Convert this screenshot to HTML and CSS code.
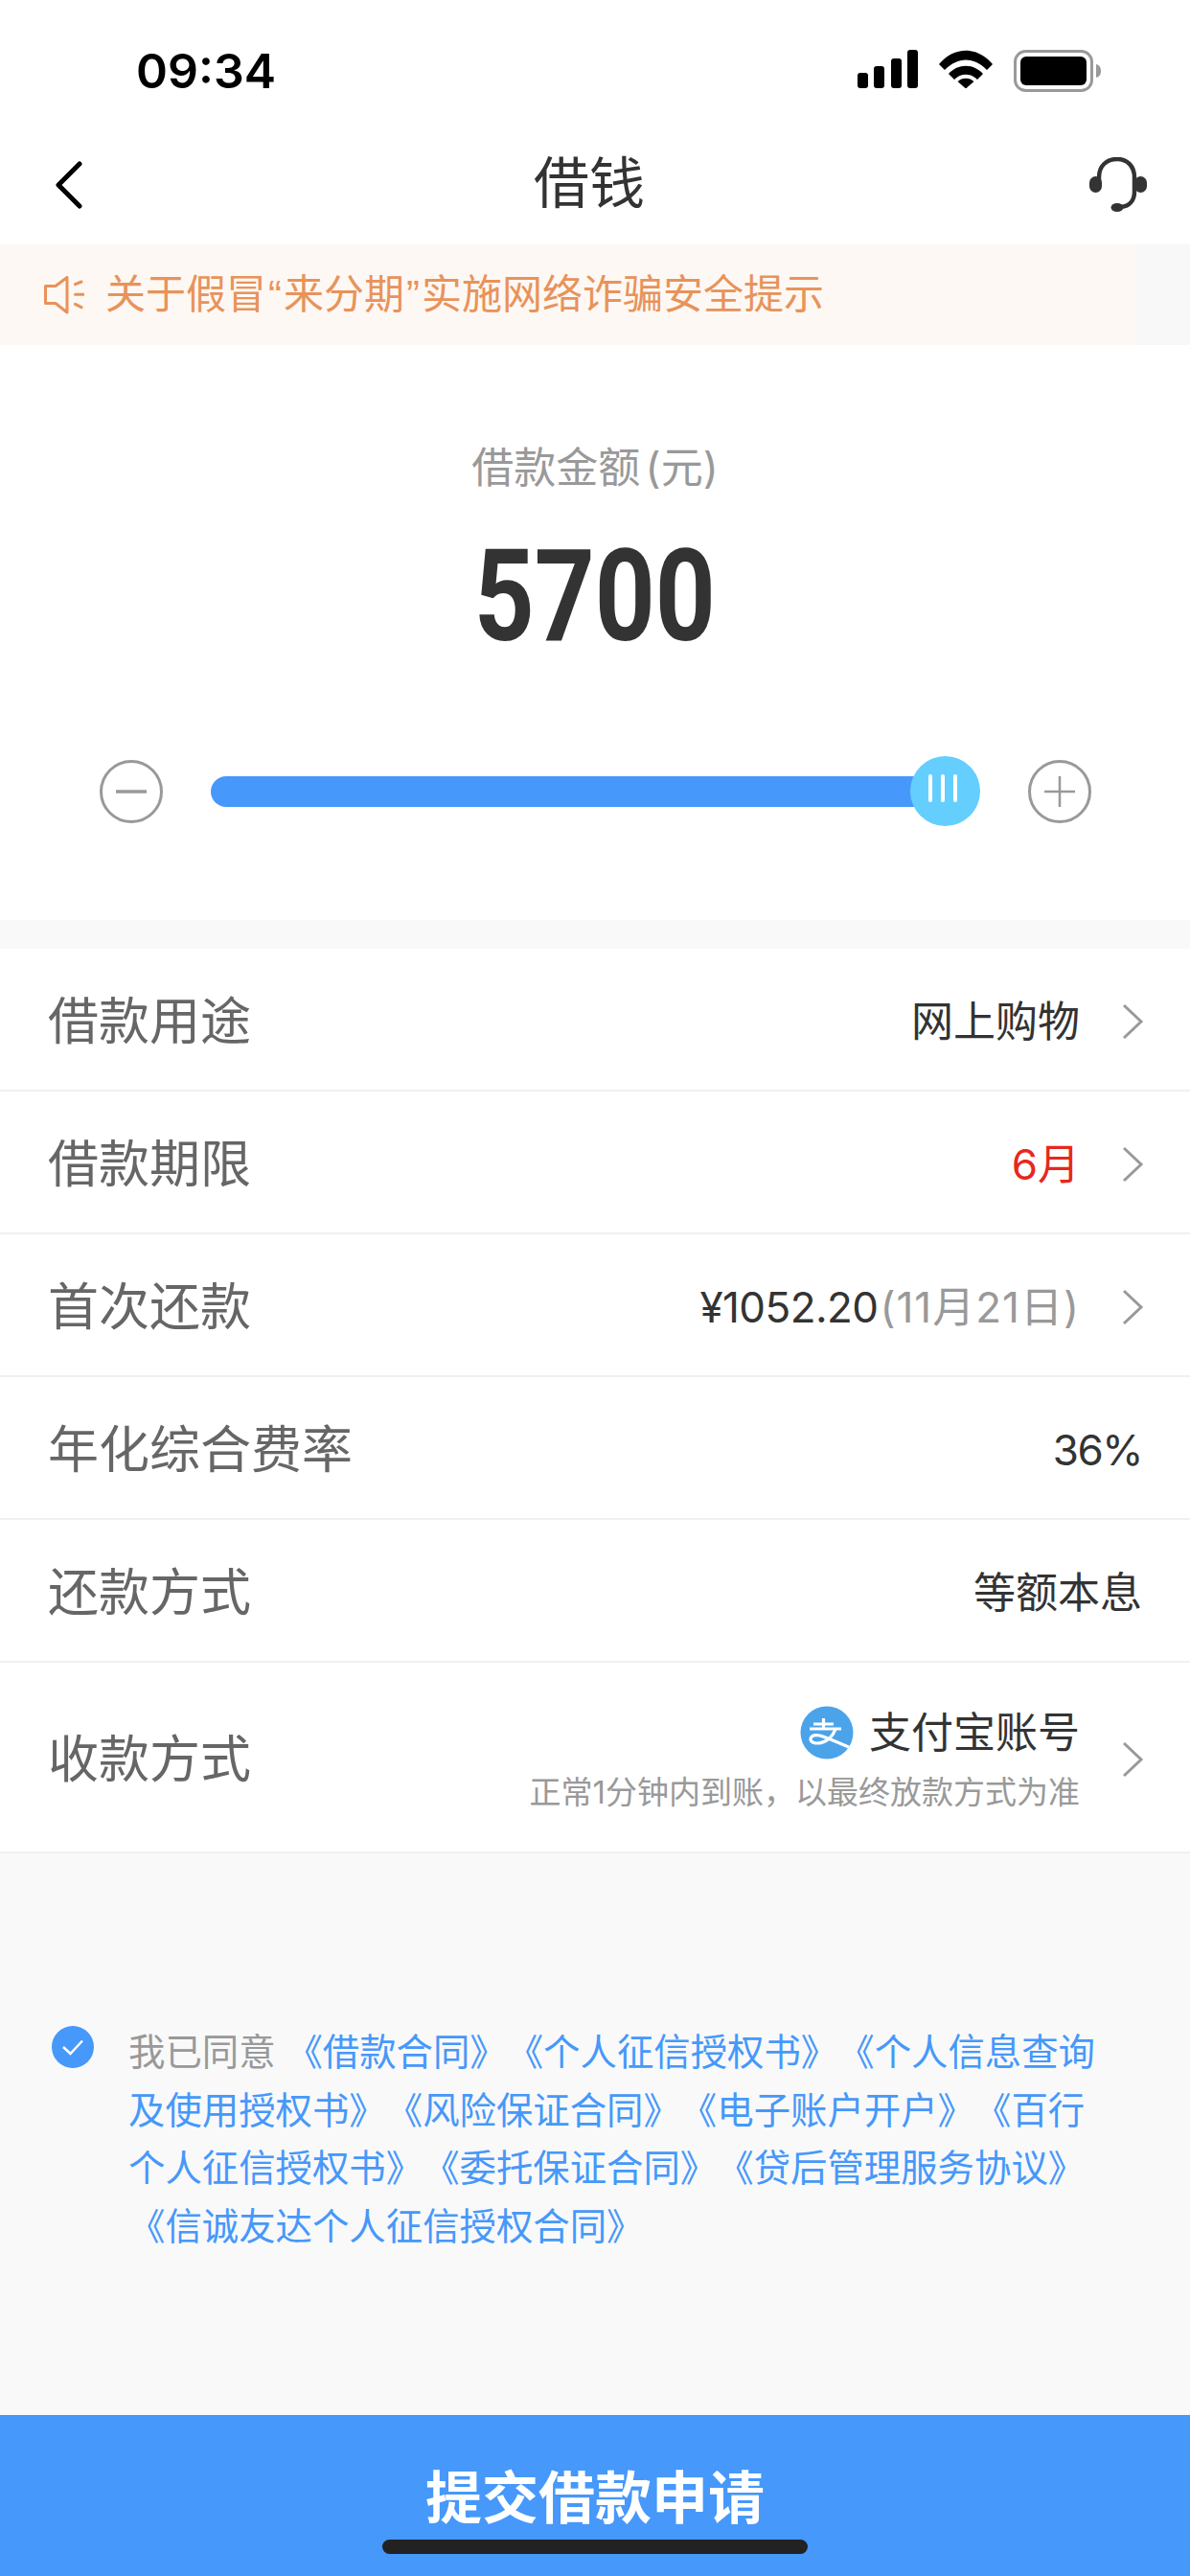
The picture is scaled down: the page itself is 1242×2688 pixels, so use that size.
FILE: index.html
```html
<!DOCTYPE html>
<html lang="zh-CN">
<head>
<meta charset="utf-8">
<title>借钱</title>
<link rel="stylesheet" href="styles.css">
</head>
<body>
<div class="page">
  <header class="status">
    <span class="time">09:34</span>
    <div class="status-icons">
      <svg class="signal" width="63" height="40" viewBox="0 0 63 40"><rect x="0" y="24" width="11" height="16" rx="3"/><rect x="17" y="17" width="11" height="23" rx="3"/><rect x="35" y="9" width="11" height="31" rx="3"/><rect x="52" y="0" width="11" height="40" rx="3"/></svg>
      <svg class="wifi" width="56" height="40" viewBox="0 0 56 40"><path d="M0 15 C16 -4 40 -4 56 15 L50 21 C36 7 20 7 6 21 Z"/><path d="M10 25 C20 14 36 14 46 25 L40 31 C33 24 23 24 16 31 Z"/><path d="M19.500 33 C24 28.500 32 28.500 36.500 33 L28 40.500 Z"/></svg>
      <svg class="battery" width="92" height="44" viewBox="0 0 92 44"><rect x="1.500" y="1.500" width="80" height="41" rx="11" fill="none" stroke="#999" stroke-width="3"/><rect x="7" y="7" width="69" height="30" rx="6"/><path d="M86 15 C90 16 91 19 91 22 C91 25 90 28 86 29 Z" fill="#999"/></svg>
    </div>
  </header>

  <nav class="nav">
    <svg class="nav-back" width="32" height="50" viewBox="0 0 32 50"><path d="M28 3 L6 25 L28 47" fill="none" stroke="#000" stroke-width="5" stroke-linecap="round" stroke-linejoin="round"/></svg>
    <h1 class="nav-title">借钱</h1>
    <svg class="nav-help" width="60" height="58" viewBox="0 0 60 58"><path d="M10 26 V21 C10 9 18 2 29 2 C40 2 47 10 47 21 V36 C47 45 42 51 33 52" fill="none" stroke="#333" stroke-width="4.500" stroke-linecap="round"/><rect x="0" y="20" width="13" height="17" rx="6.500" fill="#333"/><rect x="47" y="20" width="13" height="17" rx="6.500" fill="#333"/><ellipse cx="29" cy="52.500" rx="6.500" ry="4.500" fill="#333"/></svg>
  </nav>

  <div class="notice">
    <div class="notice-body">
      <svg class="notice-icon" width="42" height="40" viewBox="0 0 42 40"><path d="M1.500 10.500 H12 L24 1.500 V38 L12 28.500 H1.500 Z" fill="none" stroke="#e8935a" stroke-width="3" stroke-linejoin="round"/><path d="M32.500 8.700 L39 6 M32.500 19.300 H41 M32.500 29.300 L39 32.700" stroke="#e8935a" stroke-width="3" stroke-linecap="round" fill="none"/></svg>
      <span class="notice-text">关于假冒<span class="quote">“</span>来分期<span class="quote">”</span>实施网络诈骗安全提示</span>
    </div>
  </div>

  <section class="amount">
    <p class="amount-label">借款金额 (元)</p>
    <p class="amount-value">5700</p>
    <div class="slider">
      <svg width="66" height="66" viewBox="0 0 66 66"><circle cx="33" cy="33" r="31.500" fill="none" stroke="#999" stroke-width="3"/><path d="M17 33 H49" stroke="#999" stroke-width="3.500"/></svg>
      <div class="track">
        <div class="thumb"><i></i><i></i><i></i></div>
      </div>
      <svg width="66" height="66" viewBox="0 0 66 66"><circle cx="33" cy="33" r="31.500" fill="none" stroke="#999" stroke-width="3"/><path d="M17 33 H49 M33 17 V49" stroke="#999" stroke-width="2.500"/></svg>
    </div>
  </section>

  <section class="rows">
    <div class="row">
      <span class="row-label">借款用途</span>
      <span class="row-value">网上购物</span>
      <svg class="chev" width="24" height="38" viewBox="0 0 24 38"><path d="M3 2 L21 19 L3 36" fill="none" stroke="#999" stroke-width="3"/></svg>
    </div>
    <div class="row">
      <span class="row-label">借款期限</span>
      <span class="row-value red">6月</span>
      <svg class="chev" width="24" height="38" viewBox="0 0 24 38"><path d="M3 2 L21 19 L3 36" fill="none" stroke="#999" stroke-width="3"/></svg>
    </div>
    <div class="row">
      <span class="row-label">首次还款</span>
      <span class="row-value tight">¥1052.20<span class="muted">(11月21日)</span></span>
      <svg class="chev" width="24" height="38" viewBox="0 0 24 38"><path d="M3 2 L21 19 L3 36" fill="none" stroke="#999" stroke-width="3"/></svg>
    </div>
    <div class="row">
      <span class="row-label">年化综合费率</span>
      <span class="row-value rate">36%</span>
    </div>
    <div class="row">
      <span class="row-label">还款方式</span>
      <span class="row-value">等额本息</span>
    </div>
    <div class="row row-tall">
      <span class="row-label">收款方式</span>
      <div class="payee">
        <div class="payee-main">
          <svg class="alipay" width="56" height="56" viewBox="0 0 56 56"><defs><clipPath id="alipay-disc"><circle cx="28" cy="28" r="27.500"/></clipPath></defs><circle cx="28" cy="28" r="27.500" fill="#4ba3ea"/><path clip-path="url(#alipay-disc)" d="M14 19 H35 M24.500 13 V24 M10 24 H43 M37 24 C34 33 26 39 18 39 C12 39 10 36 11.500 33 C13 30 19 30 24 32 C32 35 44 40 55 45" fill="none" stroke="#fff" stroke-width="3.200"/></svg>
          <span class="row-value">支付宝账号</span>
        </div>
        <span class="payee-note">正常1分钟内到账，以最终放款方式为准</span>
      </div>
      <svg class="chev" width="24" height="38" viewBox="0 0 24 38"><path d="M3 2 L21 19 L3 36" fill="none" stroke="#999" stroke-width="3"/></svg>
    </div>
  </section>

  <section class="agree">
    <svg class="agree-check" width="44" height="44" viewBox="0 0 44 44"><circle cx="22" cy="22" r="22" fill="#4698fa"/><path d="M12 22 L19.500 29 L32 15.500" fill="none" stroke="#fff" stroke-width="2.500"/></svg>
    <p class="agree-text"><span class="agree-lead">我已同意 </span>《借款合同》《个人征信授权书》《个人信息查询<br>及使用授权书》《风险保证合同》《电子账户开户》《百行<br>个人征信授权书》《委托保证合同》《贷后管理服务协议》<br>《信诚友达个人征信授权合同》</p>
  </section>

  <footer class="submit">
    <span class="submit-text">提交借款申请</span>
    <span class="home-bar"></span>
  </footer>
</div>
</body>
</html>
```
FILE: styles.css
```css
* { box-sizing: border-box; }

html, body {
  margin: 0;
  padding: 0;
}

body {
  font-family: "Inter", "Noto Sans CJK SC", sans-serif;
  background: #f8f8f8;
  text-spacing-trim: space-all;
}

.page {
  width: 1242px;
  height: 2688px;
  display: flex;
  flex-direction: column;
  overflow: hidden;
  background: #f9f9f9;
}

/* status bar */
.status {
  height: 130px;
  flex: none;
  background: #fff;
  display: flex;
  justify-content: space-between;
  align-items: flex-start;
  padding: 46px 92px 0 142px;
}

.time {
  font-size: 50px;
  font-weight: 600;
  line-height: 56px;
  color: #000;
}

.status-icons {
  display: flex;
  align-items: flex-start;
  gap: 22px;
  padding-top: 6px;
}

/* navigation */
.nav {
  height: 125px;
  flex: none;
  background: #fff;
  position: relative;
  display: flex;
  align-items: center;
  justify-content: space-between;
  padding: 0 45px 0 55px;
}

.nav-title {
  position: absolute;
  left: 0;
  right: 12px;
  top: 26px;
  margin: 0;
  text-align: center;
  font-size: 58px;
  font-weight: 400;
  line-height: 70px;
  color: #333;
}

/* notice strip */
.notice {
  height: 105px;
  flex: none;
  background: #f8f8f8;
}

.notice-body {
  width: 1185px;
  height: 100%;
  background: #fdf8f4;
  display: flex;
  align-items: center;
  gap: 22px;
  padding-left: 46px;
}

.notice-text {
  font-size: 42px;
  line-height: 50px;
  color: #e8935a;
}

.quote {
  font-family: "Liberation Sans", sans-serif;
  margin: 0 2px;
}

/* amount block */
.amount {
  height: 600px;
  flex: none;
  background: #fff;
  display: flex;
  flex-direction: column;
  align-items: center;
  padding-top: 100px;
}

.amount-label {
  margin: 0;
  font-size: 44px;
  line-height: 56px;
  color: #999;
  word-spacing: -7px;
}

.amount-value {
  margin: 32px 0 0;
  font-family: "Roboto", "Liberation Sans", sans-serif;
  font-size: 134px;
  font-weight: 700;
  line-height: 150px;
  color: #333;
  transform: scaleX(0.82);
}

.slider {
  margin-top: 95px;
  width: 100%;
  display: flex;
  align-items: center;
  justify-content: space-between;
  padding: 0 103px 0 104px;
}

.track {
  width: 767px;
  height: 32px;
  border-radius: 16px;
  background: #4698fa;
  position: relative;
  margin-left: 50px;
  margin-right: auto;
}

.thumb {
  position: absolute;
  right: -36px;
  top: -21px;
  width: 73px;
  height: 73px;
  border-radius: 50%;
  background: #64ceff;
  display: flex;
  justify-content: center;
  align-items: center;
  gap: 9px;
  padding: 0 6px 7px 0;
}

.thumb i {
  width: 4px;
  height: 29px;
  border-radius: 2px;
  background: #fff;
}

/* detail rows */
.rows {
  flex: none;
  margin-top: 30px;
  background: #fff;
}

.row {
  height: 149px;
  display: flex;
  align-items: center;
  padding: 4px 50px 0;
  border-bottom: 2px solid #f0f0f0;
}

.row-tall {
  height: 199px;
}

.row-label {
  font-size: 53px;
  line-height: 64px;
  color: #666;
  margin-right: auto;
}

.row-value {
  font-size: 44px;
  line-height: 56px;
  color: #333;
}

.tight { letter-spacing: -0.6px; }
.rate { letter-spacing: -1.5px; }

.red { color: #e6281e; }
.muted { color: #999; margin-left: 2px; letter-spacing: 1px; }

.chev { margin-left: 43px; flex: none; margin-right: -2px; }

.payee {
  display: flex;
  flex-direction: column;
  align-items: flex-end;
  gap: 12px;
}

.payee-main {
  display: flex;
  align-items: center;
  gap: 16px;
}

.payee-note {
  font-size: 33px;
  line-height: 44px;
  color: #999;
}

/* agreement */
.agree {
  flex: 1;
  display: flex;
  align-items: flex-start;
  padding: 180px 54px 0;
  gap: 36px;
}

.agree-check { flex: none; }

.agree-text {
  margin: -3px 0 0;
  font-size: 38.4px;
  line-height: 60.500px;
  color: #4698fa;
  white-space: nowrap;
}

.agree-lead { color: #999; }

/* submit button */
.submit {
  height: 168px;
  flex: none;
  background: #4698fa;
  position: relative;
  display: flex;
  justify-content: center;
  padding-top: 49px;
}

.submit-text {
  font-size: 59px;
  line-height: 76px;
  font-weight: 700;
  color: #fff;
}

.home-bar {
  position: absolute;
  left: 399px;
  top: 130px;
  width: 444px;
  height: 15px;
  border-radius: 8px;
  background: #222;
}
```
